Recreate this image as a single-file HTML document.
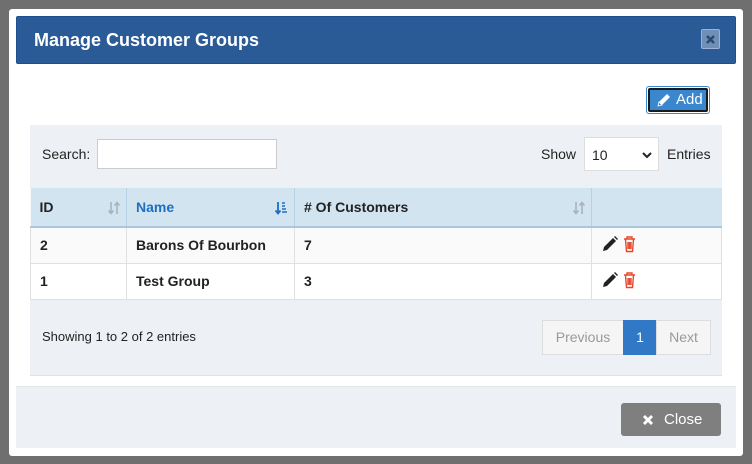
<!DOCTYPE html>
<html><head><style>
*{box-sizing:border-box;margin:0;padding:0}
body{width:752px;height:464px;background:#6f6f6f;font-family:"Liberation Sans",sans-serif;position:relative;overflow:hidden;font-size:14px;color:#222}
.abs{position:absolute}
.modal{left:9px;top:9px;width:734px;height:447px;background:#fff;border-radius:3px}
.hdr{left:16px;top:16px;width:720px;height:48px;background:#2a5b97;border:1px solid #1d4f8e;border-radius:2px}
.hdr span{position:absolute;left:17px;top:13px;color:#fff;font-weight:bold;font-size:18px}
.x{left:701px;top:29px;width:19px;height:20px;background:#6f8fb8;border:1px solid #9db3d1;border-radius:2px}
.add{left:646px;top:86px;width:64px;height:28px;border:1px solid #3a87d0;border-radius:3px;padding:1px}
.add div{width:100%;height:100%;background:#3a87d0;border:2px solid #1a1a1a;border-radius:2px;color:#fff;font-size:15px;line-height:20px;padding-left:26px;position:relative}
.panel{left:30px;top:125px;width:692px;height:251px;background:#edf1f6;border-bottom:1px solid #dde2e8}
input{position:absolute;left:97px;top:139px;width:180px;height:30px;border:1px solid #ccc;background:#fff}
.sel{left:584px;top:137px;width:75px;height:34px;border:1px solid #ddd;background:#fff;padding:9px 0 0 7px}
table{position:absolute;left:30px;top:188px;width:692px;border-collapse:collapse;background:#fafafa}
th{background:#d2e4f0;height:39px;text-align:left;font-size:14px;padding-left:9px;border-right:1px solid #b9d1e4;border-bottom:2px solid #a8c8e0;position:relative}
td{height:36px;font-weight:bold;padding-left:9px;border:1px solid #e0e0e0}
tr:last-child td{background:#fff}
.srt{position:absolute;right:6px;top:13px}
.pg{top:320px;height:35px;border:1px solid #ddd;background:#f5f5f5;color:#999;line-height:33px;text-align:center;font-size:14px}
.mf{left:16px;top:386px;width:720px;height:62px;background:#edf1f6;border-top:1px solid #e3e7ec}
.close{left:621px;top:403px;width:100px;height:33px;background:#7f7f7f;border-radius:3px;color:#fff;line-height:33px;font-size:15px;padding-left:43px}
</style></head><body>
<div class="abs modal"></div>
<div class="abs hdr"><span>Manage Customer Groups</span></div>
<div class="abs x"><svg width="17" height="18" viewBox="0 0 17 18"><path d="M5 6L12 13M12 6L5 13" stroke="#2a4a70" stroke-width="2.5"/></svg></div>
<div class="abs add"><div><svg style="position:absolute;left:5px;top:2px" width="17" height="17" viewBox="0 0 17 17"><path d="M3 14L4 10L12 2L15 5L7 13Z" fill="#fff"/><path d="M3 14L4 10L7 13Z" fill="#3a87d0" stroke="#fff" stroke-width="0.8"/></svg>Add</div></div>
<div class="abs panel"></div>
<div class="abs" style="left:42px;top:146px">Search:</div>
<input>
<div class="abs" style="left:541px;top:146px">Show</div>
<div class="abs sel">10<svg style="position:absolute;right:6px;top:13px" width="10" height="8" viewBox="0 0 10 8"><path d="M1 2L5 6L9 2" stroke="#222" stroke-width="2" fill="none"/></svg></div>
<div class="abs" style="left:667px;top:146px">Entries</div>
<table>
<tr><th style="width:96px">ID<svg class="srt" width="12" height="14" viewBox="0 0 12 14"><path d="M3 1V12M0.5 9.5L3 12.5L5.5 9.5M9 13V2M6.5 4.5L9 1.5L11.5 4.5" stroke="#a9b3bd" stroke-width="1.6" fill="none"/></svg></th><th style="width:168px;color:#1f6fc0">Name<svg class="srt" width="13" height="14" viewBox="0 0 13 14"><path d="M3 1V12M0.5 9.5L3 12.5L5.5 9.5" stroke="#1f6fc0" stroke-width="1.8" fill="none"/><path d="M7 2h3M7 5h3M7 8h4M7 11h5" stroke="#1f6fc0" stroke-width="1.5"/></svg></th><th style="width:297px"># Of Customers<svg class="srt" width="12" height="14" viewBox="0 0 12 14"><path d="M3 1V12M0.5 9.5L3 12.5L5.5 9.5M9 13V2M6.5 4.5L9 1.5L11.5 4.5" stroke="#a9b3bd" stroke-width="1.6" fill="none"/></svg></th><th style="border-right:none"></th></tr>
<tr><td>2</td><td>Barons Of Bourbon</td><td>7</td><td style="padding-left:10px"><svg width="40" height="18" viewBox="0 0 40 18"><path d="M1 16L2 12L11 3L14 6L5 15Z" fill="#222"/><path d="M12 2L13 1L16 4L15 5Z" fill="#222"/><g stroke="#e8472a" stroke-width="1.4" fill="none"><path d="M22 4H33M25 4V2H30V4M23.5 4.5L24.5 16.5H30.5L31.5 4.5M26 7V14M27.5 7V14M29 7V14"/></g></svg></td></tr>
<tr><td>1</td><td>Test Group</td><td>3</td><td style="padding-left:10px"><svg width="40" height="18" viewBox="0 0 40 18"><path d="M1 16L2 12L11 3L14 6L5 15Z" fill="#222"/><path d="M12 2L13 1L16 4L15 5Z" fill="#222"/><g stroke="#e8472a" stroke-width="1.4" fill="none"><path d="M22 4H33M25 4V2H30V4M23.5 4.5L24.5 16.5H30.5L31.5 4.5M26 7V14M27.5 7V14M29 7V14"/></g></svg></td></tr>
</table>
<div class="abs" style="left:42px;top:329px;font-size:13px">Showing 1 to 2 of 2 entries</div>
<div class="abs pg" style="left:542px;width:82px">Previous</div>
<div class="abs pg" style="left:623px;width:34px;background:#3178c6;border-color:#3178c6;color:#fff">1</div>
<div class="abs pg" style="left:656px;width:55px">Next</div>
<div class="abs mf"></div>
<div class="abs close"><svg style="position:absolute;left:21px;top:11px" width="12" height="12" viewBox="0 0 12 12"><path d="M2 2L10 10M10 2L2 10" stroke="#fff" stroke-width="3"/></svg>Close</div>
</body></html>
